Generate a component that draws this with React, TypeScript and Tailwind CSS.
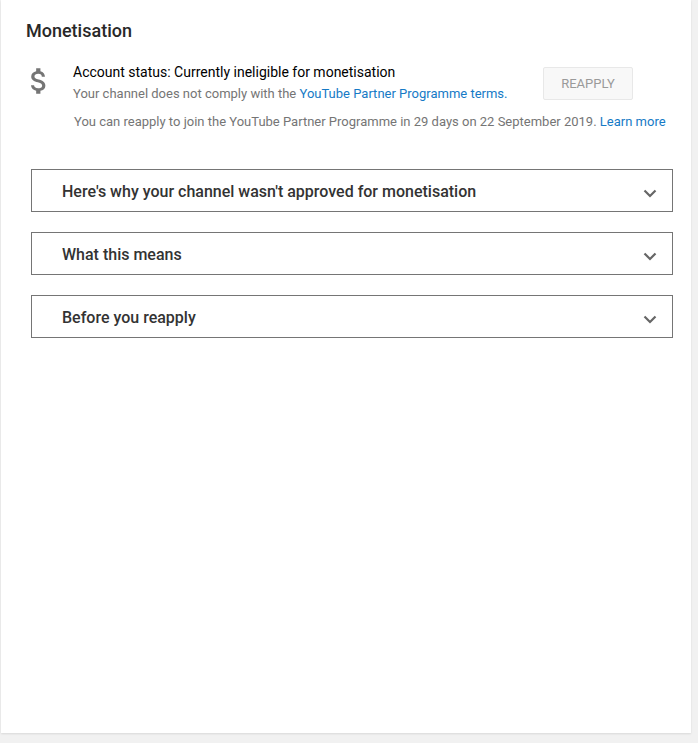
export default function App() {
  const rows = ["Here's why your channel wasn't approved for monetisation", "What this means", "Before you reapply"];
  return (
    <div className="h-[743px] w-[698px] overflow-hidden bg-[#f1f1f1] font-['Roboto',sans-serif]">
      <div className="ml-px h-[733px] w-[690px] bg-white pl-[25px] pr-[18px] pt-[20px] shadow-[0_1px_2px_rgba(0,0,0,0.1)]">
        <h1 className="text-[18px] font-medium leading-[21px] text-[#282828]">Monetisation</h1>
        <div className="mt-[21px] flex">
          <svg viewBox="0 0 24 24" className="ml-[-4px] mt-[2px] h-[34px] w-[34px] shrink-0 fill-[#757575]">
            <path d="M11.8 10.9c-2.27-.59-3-1.2-3-2.15 0-1.09 1.01-1.85 2.7-1.85 1.78 0 2.44.85 2.5 2.1h2.21c-.07-1.72-1.12-3.3-3.21-3.81V3h-3v2.16c-1.94.42-3.5 1.68-3.5 3.61 0 2.31 1.91 3.46 4.7 4.13 2.5.6 3 1.48 3 2.41 0 .69-.49 1.79-2.7 1.79-2.06 0-2.87-.92-2.98-2.1h-2.2c.12 2.19 1.76 3.42 3.68 3.83V21h3v-2.15c1.95-.37 3.5-1.5 3.5-3.55 0-2.84-2.43-3.81-4.7-4.4z" />
          </svg>
          <div className="ml-[17px] flex-1">
            <div className="flex items-start justify-between pr-[40px]">
              <div>
                <p className="text-[14px] leading-[20px] text-black">Account status: Currently ineligible for monetisation</p>
                <p className="mt-[3px] text-[13px] leading-[18px] text-[#757575]">
                  Your channel does not comply with the <a className="text-[#167ac6]">YouTube Partner Programme terms.</a>
                </p>
              </div>
              <button className="mt-[5px] h-[33px] w-[90px] rounded-[2px] border border-[#e8e8e8] bg-[#f8f8f8] text-[13px] text-[#9a9a9a]">REAPPLY</button>
            </div>
            <p className="ml-px mt-[10px] whitespace-nowrap text-[13px] leading-[18px] text-[#757575]">
              You can reapply to join the YouTube Partner Programme in 29 days on 22 September 2019. <a className="text-[#167ac6]">Learn more</a>
            </p>
          </div>
        </div>
        <div className="ml-[5px] mt-[38px] flex flex-col gap-[20px]">
          {rows.map((r) => (
            <div key={r} className="flex h-[43px] items-center justify-between border border-[#757575] pl-[30px] pr-[15px]">
              <span className="mt-[3px] text-[16px] font-medium text-[#333333]">{r}</span>
              <svg viewBox="0 0 14 9" className="mt-[6px] h-[9px] w-[14px] fill-none stroke-[#666666] stroke-[2.2]">
                <path d="M1.5 1.5 7 7l5.5-5.5" />
              </svg>
            </div>
          ))}
        </div>
      </div>
    </div>
  );
}
